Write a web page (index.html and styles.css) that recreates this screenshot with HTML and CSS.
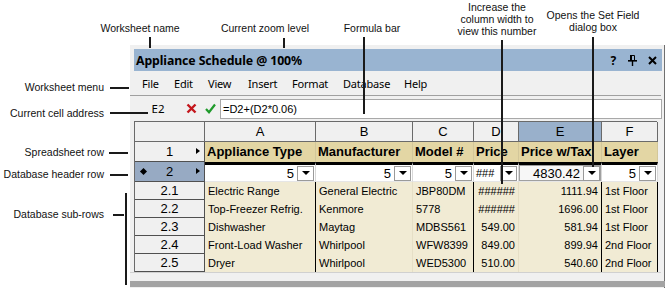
FILE: index.html
```html
<!DOCTYPE html>
<html>
<head>
<meta charset="utf-8">
<link rel="stylesheet" href="styles.css">
</head>
<body>
<div class="stage">
  <div class="window">
    <div class="titlebar">
      <span class="title">Appliance Schedule @ 100%</span>
      <span class="tb-icons">
        <span class="tb-btn q">?</span>
        <span class="tb-btn"><svg width="9" height="11" viewBox="0 0 9 11"><path d="M2.5 0.5h4v5h-4z" fill="none" stroke="#000" stroke-width="1"/><rect x="2" y="0" width="2" height="6" fill="#000"/><rect x="0" y="5" width="9" height="1.6" fill="#000"/><rect x="3.8" y="6" width="1.4" height="5" fill="#000"/></svg></span>
        <span class="tb-btn"><svg width="9" height="9" viewBox="0 0 9 9"><path d="M1 1L8 8M8 1L1 8" stroke="#000" stroke-width="2"/></svg></span>
      </span>
    </div>
    <div class="menubar">
      <span class="mi m-file">File</span>
      <span class="mi m-edit">Edit</span>
      <span class="mi m-view">View</span>
      <span class="mi m-insert">Insert</span>
      <span class="mi m-format">Format</span>
      <span class="mi m-db">Database</span>
      <span class="mi">Help</span>
    </div>
    <div class="formula">
      <span class="addr">E2</span>
      <span class="fx"><svg width="11" height="11" viewBox="0 0 11 11"><path d="M1.5 1.5L9.5 9.5M9.5 1.5L1.5 9.5" stroke="#c4161c" stroke-width="2.4"/></svg></span>
      <span class="fx"><svg width="11" height="11" viewBox="0 0 11 11"><path d="M1 6L4 9.2L10 1.5" fill="none" stroke="#1f9a2b" stroke-width="2.2"/></svg></span>
      <div class="fbox">=D2+(D2*0.06)</div>
    </div>
    <div class="grid">
      <div class="ch corner"></div>
      <div class="ch">A</div>
      <div class="ch">B</div>
      <div class="ch">C</div>
      <div class="ch">D</div>
      <div class="ch sel">E</div>
      <div class="ch">F</div>

      <div class="rh"><span class="num">1</span><span class="arr"></span></div>
      <div class="hd">Appliance Type</div>
      <div class="hd">Manufacturer</div>
      <div class="hd">Model #</div>
      <div class="hd">Price</div>
      <div class="hd">Price w/Tax</div>
      <div class="hd">Layer</div>

      <div class="rh rsel"><span class="dia"></span><span class="num">2</span><span class="arr"></span></div>
      <div class="db"><span class="v">5</span><span class="dd"></span></div>
      <div class="db"><span class="v">5</span><span class="dd"></span></div>
      <div class="db"><span class="v">5</span><span class="dd"></span></div>
      <div class="db"><span class="v hash">###</span><span class="dd"></span></div>
      <div class="db cur"><span class="v">4830.42</span><span class="dd"></span></div>
      <div class="db"><span class="v">5</span><span class="dd"></span></div>

      <div class="rh"><span class="num">2.1</span></div>
      <div class="c ca">Electric Range</div>
      <div class="c cb">General Electric</div>
      <div class="c cc">JBP80DM</div>
      <div class="c cd r">######</div>
      <div class="c ce r">1111.94</div>
      <div class="c cf">1st Floor</div>

      <div class="rh"><span class="num">2.2</span></div>
      <div class="c ca">Top-Freezer Refrig.</div>
      <div class="c cb">Kenmore</div>
      <div class="c cc">5778</div>
      <div class="c cd r">######</div>
      <div class="c ce r">1696.00</div>
      <div class="c cf">1st Floor</div>

      <div class="rh"><span class="num">2.3</span></div>
      <div class="c ca">Dishwasher</div>
      <div class="c cb">Maytag</div>
      <div class="c cc">MDBS561</div>
      <div class="c cd r">549.00</div>
      <div class="c ce r">581.94</div>
      <div class="c cf">1st Floor</div>

      <div class="rh"><span class="num">2.4</span></div>
      <div class="c ca">Front-Load Washer</div>
      <div class="c cb">Whirlpool</div>
      <div class="c cc">WFW8399</div>
      <div class="c cd r">849.00</div>
      <div class="c ce r">899.94</div>
      <div class="c cf">2nd Floor</div>

      <div class="rh"><span class="num">2.5</span></div>
      <div class="c ca">Dryer</div>
      <div class="c cb">Whirlpool</div>
      <div class="c cc">WED5300</div>
      <div class="c cd r">510.00</div>
      <div class="c ce r">540.60</div>
      <div class="c cf">2nd Floor</div>
    </div>
    <div class="filler"></div>
    <div class="bottombar"></div>
  </div>

  <div class="lbl top t-wsname">Worksheet name</div>
  <div class="lbl top t-zoom">Current zoom level</div>
  <div class="lbl top t-formula">Formula bar</div>
  <div class="lbl top t-incr">Increase the<br>column width to<br>view this number</div>
  <div class="lbl top t-set">Opens the Set Field<br>dialog box</div>

  <div class="lbl left l-menu">Worksheet menu</div>
  <div class="lbl left l-addr">Current cell address</div>
  <div class="lbl left l-row">Spreadsheet row</div>
  <div class="lbl left l-dbh">Database header row</div>
  <div class="lbl left l-sub">Database sub-rows</div>

  <div class="vl v-wsname"></div>
  <div class="vl v-zoom"></div>
  <div class="vl v-formula"></div>
  <div class="vl v-incr"></div>
  <div class="vl v-set"></div>
  <div class="vl v-sub"></div>
  <div class="hl h-menu"></div>
  <div class="hl h-addr"></div>
  <div class="hl h-row"></div>
  <div class="hl h-dbh"></div>
  <div class="hl h-sub"></div>
</div>
</body>
</html>
```

FILE: styles.css
```css
* { box-sizing: border-box; }
html, body { margin: 0; padding: 0; }
body {
  width: 667px;
  height: 288px;
  overflow: hidden;
  background: #fff;
  font-family: "Noto Sans", "Open Sans", sans-serif;
  color: #000;
}
.stage {
  position: relative;
  width: 667px;
  height: 288px;
  padding: 45px 0 0 130px;
}
.window {
  width: 535px;
  height: 243px;
  background: #f0f0f0;
  border-right: 1px solid #707070;
  padding: 4px 0 0 4px;
  display: flex;
  flex-direction: column;
}
.titlebar {
  width: 528px;
  height: 22px;
  flex: none;
  background: #99b4d1;
  display: flex;
  align-items: center;
  padding-left: 2px;
}
.title {
  font-weight: 700;
  font-size: 12.3px;
  letter-spacing: -0.1px;
}
.tb-icons {
  margin-left: auto;
  display: flex;
  align-items: center;
}
.tb-btn {
  width: 19.5px;
  display: flex;
  justify-content: center;
  align-items: center;
}
.tb-btn.q { font-weight: 700; font-size: 12px; }

.menubar {
  height: 25px;
  flex: none;
  display: flex;
  align-items: center;
  font-size: 11px;
  letter-spacing: -0.2px;
  border-bottom: 1px solid #a0a0a0;
  width: 531px;
  margin-left: -4px;
  padding-left: 12px;
}
.m-file { width: 32px; }
.m-edit { width: 34px; }
.m-view { width: 40px; }
.m-insert { width: 44px; }
.m-format { width: 51px; }
.m-db { width: 61px; }

.formula {
  height: 25px;
  flex: none;
  display: flex;
  align-items: center;
}
.addr {
  width: 48px;
  text-align: center;
  font-size: 11.5px;
}
.fx {
  width: 19px;
  display: flex;
  justify-content: center;
  align-items: center;
}
.fbox {
  width: 442px;
  height: 20px;
  background: #fff;
  border: 1px solid #a8a8a8;
  font-family: "Liberation Sans", Arial, sans-serif;
  font-size: 11px;
  line-height: 18px;
  padding-left: 2px;
}

.grid {
  flex: none;
  display: grid;
  grid-template-columns: 70px 111px 97px 61px 45px 83px 56px;
  grid-template-rows: 20px 20px 20px repeat(5, 18px);
  border-top: 1px solid #6a6a6a;
  border-left: 1px solid #6a6a6a;
  width: 523px;
  font-family: "Liberation Sans", Arial, sans-serif;
}
.ch {
  background: #f0f0f0;
  border-right: 1px solid #6a6a6a;
  border-bottom: 1px solid #6a6a6a;
  text-align: center;
  font-size: 13px;
  line-height: 19px;
}
.ch.sel { background: #99b0cb; }
.rh {
  background: #f0f0f0;
  border-right: 1px solid #505050;
  border-bottom: 1px solid #505050;
  position: relative;
  display: flex;
  justify-content: center;
  align-items: center;
  font-size: 13px;
}
.rh.rsel { background: #97aac3; }
.arr {
  position: absolute;
  right: 4px;
  top: 50%;
  margin-top: -3.5px;
  width: 0; height: 0;
  border-top: 3.5px solid transparent;
  border-bottom: 3.5px solid transparent;
  border-left: 4px solid #000;
}
.dia {
  position: absolute;
  left: 6px;
  top: 50%;
  margin-top: -2.5px;
  width: 5px; height: 5px;
  background: #000;
  transform: rotate(45deg);
}
.hd {
  background: #e3d6a4;
  border-right: 1px solid #d3c79a;
  font-weight: 700;
  font-size: 13px;
  line-height: 19px;
  padding-left: 2px;
  white-space: nowrap;
  overflow: hidden;
}
.db {
  background: #fff;
  border-top: 3px solid #000;
  border-right: 1px solid #d8d8d8;
  border-bottom: 1px solid #e6e6e6;
  display: flex;
  justify-content: flex-end;
  align-items: center;
  padding-right: 1px;
  font-size: 13px;
}
.db .v { padding-right: 3px; }
.db .hash { font-size: 11px; margin-right: auto; padding-left: 2px; }
.dd {
  width: 17px;
  height: 15px;
  background: #fff;
  border: 1px solid #9a9a9a;
  display: flex;
  justify-content: center;
  align-items: center;
}
.dd::after {
  content: "";
  width: 0; height: 0;
  border-left: 4px solid transparent;
  border-right: 4px solid transparent;
  border-top: 4px solid #000;
}
.db.cur {
  border-top: 3px solid #000;
  box-shadow: inset 0 0 0 1px #a0a0a0;
  background: #f7f7f7;
}
.c {
  background: #f1ebd4;
  font-size: 11px;
  line-height: 18px;
  padding: 0 3px;
  white-space: nowrap;
  overflow: hidden;
  border-right: 1px solid #000;
}
.c.r { text-align: right; }
.c.cb, .c.cd { border-right-color: #e6dfc6; }
.filler {
  flex: none;
  height: 9px;
  width: 531px;
  margin-left: -4px;
  border-top: 1px solid #d0d0d0;
  background: #f0f0f0;
}
.bottombar {
  flex: none;
  height: 6px;
  width: 535px;
  margin-left: -4px;
  background: #a3a3a3;
}

/* annotations */
.lbl {
  position: absolute;
  font-family: "Liberation Sans", Arial, sans-serif;
  font-size: 10.5px;
  line-height: 13px;
  color: #111;
  white-space: nowrap;
}
.top { text-align: center; }
.t-wsname { left: 90px; width: 100px; top: 22px; }
.t-zoom { left: 215px; width: 100px; top: 22px; }
.t-formula { left: 322px; width: 100px; top: 22px; }
.t-incr { left: 452px; width: 90px; top: 1px; line-height: 12.2px; }
.t-set { left: 545px; width: 96px; top: 9px; line-height: 12.2px; }
.left { left: 0; width: 104px; text-align: right; }
.l-menu { top: 81px; }
.l-addr { top: 107px; }
.l-row { top: 146px; }
.l-dbh { top: 168px; }
.l-sub { top: 208px; }

.vl, .hl { position: absolute; background: #1a1a1a; }
.vl { width: 2px; }
.hl { height: 2px; }
.v-wsname { left: 149px; top: 37px; height: 11px; }
.v-zoom { left: 283px; top: 38px; height: 10px; }
.v-formula { left: 363px; top: 37px; height: 77px; }
.v-incr { left: 501px; top: 40px; height: 144px; }
.v-set { left: 592px; top: 37px; height: 130px; }
.v-sub { left: 125px; top: 193px; height: 92px; }
.h-menu { left: 110px; top: 87px; width: 19px; }
.h-addr { left: 110px; top: 112px; width: 38px; }
.h-row { left: 109px; top: 152px; width: 19px; }
.h-dbh { left: 110px; top: 174px; width: 18px; }
.h-sub { left: 113px; top: 214px; width: 11px; }
```
